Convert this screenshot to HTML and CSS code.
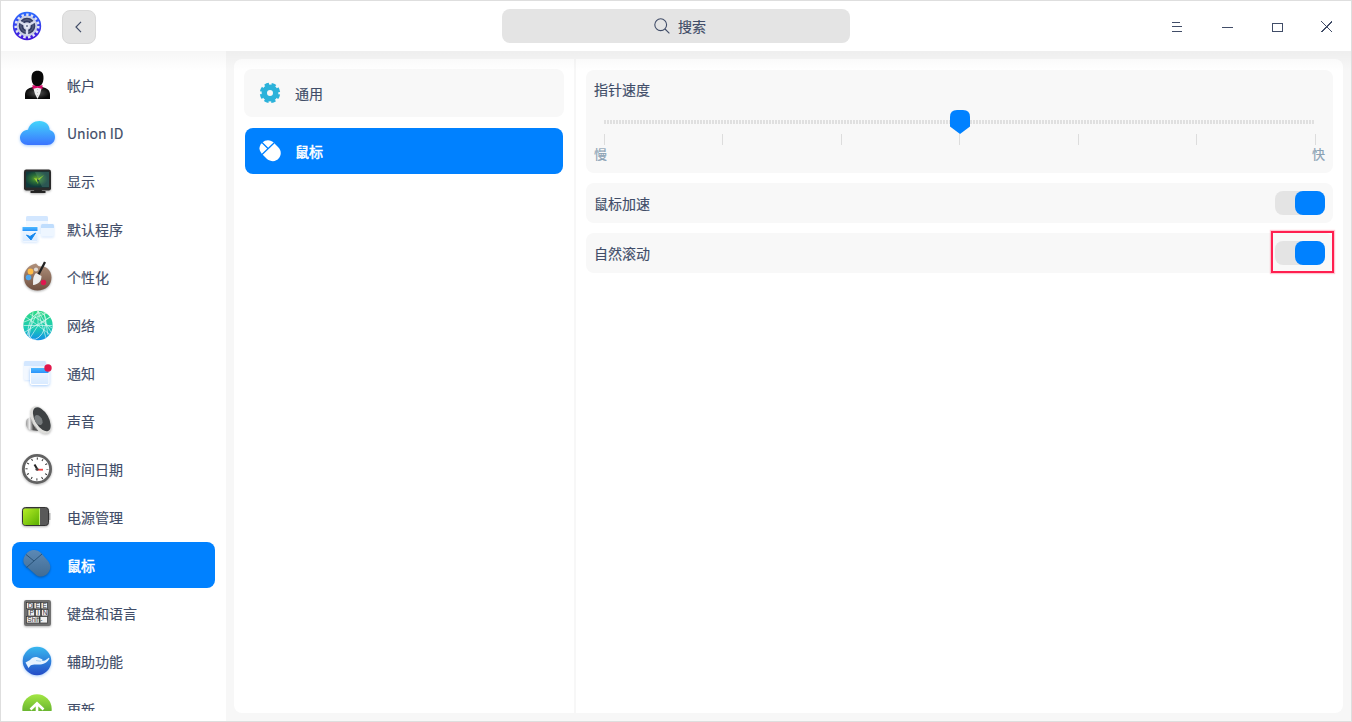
FILE: index.html
```html
<!DOCTYPE html>
<html lang="zh-CN">
<head>
<meta charset="utf-8">
<title>控制中心</title>
<link rel="stylesheet" href="styles.css">
</head>
<body>
<div class="window">
  <header class="titlebar">
    <div class="title-left">
      <svg class="app-icon" viewBox="0 0 30 30">
        <defs><linearGradient id="logo" x2="0" y2="1"><stop stop-color="#2c6dff"/><stop offset="1" stop-color="#4312d8"/></linearGradient></defs>
        <circle cx="15" cy="15" r="14.2" fill="url(#logo)"/>
        <circle cx="15" cy="15" r="11.2" fill="none" stroke="#dfe3f6" stroke-width="2.8" stroke-dasharray="2.4 2.291"/>
        <circle cx="15" cy="15" r="10.4" fill="#c9cee2"/>
        <circle cx="15" cy="15" r="6" fill="none" stroke="#343c63" stroke-width="4.6"/>
        <circle cx="15" cy="15" r="6.2" fill="none" stroke="#68718c" stroke-width=".9"/>
        <path d="M15 15V24M15 15L7.200 10.500M15 15L22.800 10.500" stroke="#d8dced" stroke-width="2.4"/>
        <circle cx="15" cy="15" r="2.7" fill="#e6e9f5"/><circle cx="15" cy="15" r="1" fill="#6a7391"/>
      </svg>
      <button class="back"><svg viewBox="0 0 12 12"><path d="M8 .8L3 6l5 5.2" fill="none" stroke="#414d68" stroke-width="1.2"/></svg></button>
    </div>
    <div class="search">
      <svg viewBox="0 0 16 16" fill="none" stroke="#414d68" stroke-width="1.1"><circle cx="6.7" cy="6.7" r="5.9"/><path d="M11 11l4.400 4.400"/></svg>
      <span>搜索</span>
    </div>
    <div class="controls">
      <svg viewBox="0 0 12 12"><path d="M1 1.500h8M1 5.500h10M1 10.500h10"/></svg>
      <svg viewBox="0 0 12 12"><path d="M1 6.500h11"/></svg>
      <svg viewBox="0 0 12 12"><path d="M1.500 2.500h10v8h-10z"/></svg>
      <svg viewBox="0 0 12 12"><path d="M.5 .5l10.500 10.500M11 .5L.5 11"/></svg>
    </div>
  </header>
  <div class="body">
    <nav class="sidebar">
      <div class="item">
        <svg viewBox="0 0 36 36"><defs><radialGradient id="suit"><stop stop-color="#555"/><stop offset="1" stop-color="#080808"/></radialGradient></defs>
          <path d="M6 32v-4c0-5 3-7 8-8h9c5 1 8 3 8 8v4z" fill="url(#suit)"/><path d="M14 20h9l-2 7-2.500 5L16 27z" fill="#eee"/><path d="M18.500 22v9" stroke="#aaa" stroke-width=".6" stroke-dasharray="1 2"/>
          <path d="M12.500 11c0-5 2-7.300 6-7.300s6 2.300 6 7.300c0 5-2.500 8.500-6 8.500s-6-3.500-6-8.500z" fill="#090909"/><path d="M13.500 18l5 1.300 5-1.300v4l-5-1.200-5 1.200z" fill="#d50a68"/></svg>
        <span>帐户</span></div>
      <div class="item">
        <svg viewBox="0 0 36 36"><defs><linearGradient id="cloud" x2="0" y2="1"><stop stop-color="#43d5fb"/><stop offset="1" stop-color="#3b74ff"/></linearGradient></defs>
          <path class="blue-shadow" d="M9 30C4.500 30 1 27 1 22.800S4.500 15 9 14.800C10.500 9 15 6 20.500 6c6 0 9.800 3.500 10.200 9 3.300.8 5.300 3.500 5.300 7 0 4.800-3.300 8-8 8z" fill="url(#cloud)"/></svg>
        <span>Union ID</span></div>
      <div class="item">
        <svg viewBox="0 0 36 36"><defs><radialGradient id="screen" cx=".45" cy=".45"><stop stop-color="#6da62b"/><stop offset=".45" stop-color="#2b6f38"/><stop offset="1" stop-color="#103a3c"/></radialGradient></defs>
          <path class="shadow" d="M16 24h6l1 4h3.500v2H11.500v-2H15z" fill="#292929"/><rect class="shadow" x="5" y="6.500" width="27" height="21" rx="2.200" fill="#2a2a2a"/><rect x="7" y="8.500" width="23" height="16" fill="url(#screen)"/><path d="M16 9h14v15h-7z" fill="#9bc7ad" opacity=".2"/><path d="M15 15l4 1 6-4-5 5-1 4-2-3z" fill="#9ad633"/><path d="M18 16l2 1-1 4z" fill="#102d54"/></svg>
        <span>显示</span></div>
      <div class="item">
        <svg viewBox="0 0 36 36"><defs><linearGradient id="blue" x2="0" y2="1"><stop stop-color="#4eb9ff"/><stop offset="1" stop-color="#2a94fb"/></linearGradient><linearGradient id="pale" x2="0" y2="1"><stop stop-color="#f4f9ff"/><stop offset="1" stop-color="#d8eaff"/></linearGradient></defs>
          <rect x="7" y="5" width="22" height="18" rx="1.500" fill="#f2f8ff"/><path d="M7 10V6.500Q7 5 8.500 5h19Q29 5 29 6.500V10z" fill="#d3e7ff"/>
          <g class="soft-shadow"><rect x="22" y="13" width="13" height="12.500" rx="1.500" fill="#eef6ff"/><path d="M22 17v-2.500q0-1.500 1.500-1.500h10q1.500 0 1.500 1.500V17z" fill="#bfddfd"/></g>
          <g class="soft-shadow"><rect x="3" y="15" width="16" height="15.500" rx="1.500" fill="url(#pale)" stroke="#fff" stroke-width=".6"/><path d="M3.500 16h15v4h-15z" fill="url(#blue)"/><path d="M7.500 24l3.500 1.500 5.500-3.500-4.500 7z" fill="#1487ef" stroke="#1487ef"/></g></svg>
        <span>默认程序</span></div>
      <div class="item">
        <svg viewBox="0 0 36 36"><defs><linearGradient id="wood" x2="0" y2="1"><stop stop-color="#b0917c"/><stop offset="1" stop-color="#705040"/></linearGradient></defs>
          <path class="shadow" d="M17 4.500q3 4.500 7 2.500l4 2c3 2.500 4.500 5.500 4.500 9.500 0 8-6 13-14 13S5 26 5 18.500 10 6 17 4.500z" fill="url(#wood)"/><circle cx="17" cy="10.500" r="2.100" fill="#ded9d5"/><circle cx="11.500" cy="12.500" r="2.900" fill="#ffbc48"/><circle cx="9.500" cy="18.500" r="2.800" fill="#4da7ee"/><circle cx="24.500" cy="23.500" r="2.700" fill="#df184f"/><path d="M26 3L19.500 15.500" stroke="#222" stroke-width="2.300"/><path d="M17 14l5.500 3c0 5-3 8.500-8.500 9 .5-3-1-8 3-12z" fill="#eee"/></svg>
        <span>个性化</span></div>
      <div class="item">
        <svg viewBox="0 0 36 36"><defs><linearGradient id="net" x2="0" y2="1"><stop stop-color="#2fd985"/><stop offset=".6" stop-color="#1bcbb5"/><stop offset="1" stop-color="#118fe8"/></linearGradient></defs>
          <circle cx="19" cy="18.500" r="14.700" fill="url(#net)"/><g fill="none" stroke="#fff" stroke-width=".65" opacity=".85"><path d="M4.500 18.500h29M19 4v14.500L7 10m12-6L8 28m11-24l8 27m-8-27l13 21M19 18.500L11 31m8-12.500L31 10M19 18.500l12 9M14 5l-4 25M25 5l4 23M5 15L28 6M6 25l25-15M11 7l22 14"/><ellipse cx="18" cy="19" rx="8" ry="14" transform="rotate(20 18 19)"/></g></svg>
        <span>网络</span></div>
      <div class="item">
        <svg viewBox="0 0 36 36"><g class="soft-shadow"><rect x="5" y="6" width="22" height="19" rx="1.500" fill="#f3f8ff"/><path d="M5 11V7.500Q5 6 6.500 6h19Q27 6 27 7.500V11z" fill="#d3e7ff"/></g><g class="blue-shadow"><rect x="11.500" y="13" width="18.500" height="16.500" rx="1.500" fill="url(#pale)" stroke="#fff"/><path d="M12 13h17.500v5H12z" fill="url(#blue)"/></g><circle cx="29" cy="13" r="3.700" fill="#e1174c"/></svg>
        <span>通知</span></div>
      <div class="item">
        <svg viewBox="0 0 36 36"><defs><linearGradient id="metal"><stop stop-color="#999"/><stop offset=".3" stop-color="#eee"/><stop offset=".6" stop-color="#555"/></linearGradient></defs>
          <path class="shadow" d="M8 16l6-3 5 15-7-1c-5-1-6-7-4-11z" fill="url(#metal)"/><ellipse class="shadow" cx="21.500" cy="17" rx="8.500" ry="15" transform="rotate(-30 21.500 17)" fill="#dededb"/><ellipse cx="22.800" cy="16.200" rx="6.800" ry="13.300" transform="rotate(-30 22.800 16.200)" fill="#3d4143"/><ellipse cx="19.500" cy="17" rx="3.500" ry="5.500" transform="rotate(-30 19.500 17)" fill="#777c7e"/></svg>
        <span>声音</span></div>
      <div class="item">
        <svg viewBox="0 0 36 36"><circle class="shadow" cx="18" cy="18" r="13.600" fill="#fff" stroke="#626262" stroke-width="2.800"/><circle cx="18" cy="18" r="10.400" fill="none" stroke="#333" stroke-width="2.200" stroke-dasharray="1 4.445" stroke-dashoffset=".5"/><path d="M18.500 18.500l-3-5" stroke="#222" stroke-width="2"/><path d="M18 18.700h6" stroke="#f04444" stroke-width="1.800"/><circle cx="18" cy="18.300" r="1.500" fill="#444"/></svg>
        <span>时间日期</span></div>
      <div class="item">
        <svg viewBox="0 0 36 36"><defs><linearGradient id="battery" x2="1" y2="1"><stop stop-color="#b5ed26"/><stop offset="1" stop-color="#58ae00"/></linearGradient></defs>
          <path d="M29 14h2.500v7H29z" fill="#bbb"/><rect class="shadow" x="3.500" y="8.500" width="26" height="18" rx="3" fill="#595959" stroke="#333"/><path d="M6 9.500h15V26H6q-2 0-2-2V11.500q0-2 2-2z" fill="url(#battery)"/><path d="M20.500 9.500V26" stroke="#bef26b"/></svg>
        <span>电源管理</span></div>
      <div class="item selected">
        <svg viewBox="0 0 36 36"><defs><linearGradient id="mouse" x2="0" y2="1"><stop stop-color="#5c89b5"/><stop offset="1" stop-color="#416c94"/></linearGradient></defs>
          <g class="shadow"><path d="M7 7c4-5 11-5 15-1l7 8c3 4 3 8 0 12s-9 5-13 1L7 19c-4-3-3-8 0-12z" fill="url(#mouse)"/><path d="M7.500 20.500L23 7M7 7.500l8 6.500" fill="none" stroke="#2a5479"/></g></svg>
        <span>鼠标</span></div>
      <div class="item">
        <svg viewBox="0 0 36 36"><rect class="shadow" x="5" y="5" width="27" height="26" rx="2.200" fill="#707070"/><g fill="#f0f0f0" stroke="#333" stroke-width=".7"><rect x="7.500" y="7.500" width="6.500" height="6.300"/><rect x="15" y="7.500" width="6.500" height="6.300"/><rect x="22" y="7.500" width="6.500" height="6.300"/><rect x="9" y="14.500" width="6.500" height="6.500"/><rect x="16.500" y="14.500" width="5" height="6.500"/><rect x="22.500" y="14.500" width="6.500" height="6.500"/><rect x="7.500" y="21.500" width="13" height="6.500"/><rect x="21" y="21.500" width="7.500" height="6.500"/></g><g class="keys"><text x="8.700" y="12.800">D</text><text x="16.400" y="12.800">E</text><text x="23.400" y="12.800">E</text><text x="10.500" y="19.900">P</text><text x="18.200" y="19.900">I</text><text x="23.700" y="19.900">N</text><text x="8.300" y="27">Shift-</text></g></svg>
        <span>键盘和语言</span></div>
      <div class="item">
        <svg viewBox="0 0 36 36"><defs><linearGradient id="assist" x2="0" y2="1"><stop stop-color="#38b8ef"/><stop offset="1" stop-color="#244bc6"/></linearGradient></defs><circle class="blue-shadow" cx="18" cy="18" r="14.300" fill="url(#assist)"/><path d="M6.500 19.500l4.500-2.500c2-2.500 5-3.500 8-2.500l4 1.800c1 .7.500 1.700-1 1.800l4-.6 3.500-2.500c1-.5 1 .5.500 1.200-1.500 2.500-4 4.300-7 5-4 1-8-.5-11.500 1.300L9.500 25z" fill="#e6f3ff"/><path d="M17 17.500l5 .8" fill="none" stroke="#91c7ef" stroke-width=".7"/></svg>
        <span>辅助功能</span></div>
      <div class="item">
        <svg viewBox="0 0 36 36"><defs><linearGradient id="update" x2="0" y2="1"><stop stop-color="#a3e744"/><stop offset="1" stop-color="#3e9020"/></linearGradient></defs><circle cx="18" cy="18" r="14.700" fill="url(#update)"/><path d="M11.500 18.500L18 12.300l6.500 6.200M18 12.500V27" fill="none" stroke="#fff" stroke-width="2.600"/></svg>
        <span>更新</span></div>
    </nav>
    <main class="content">
      <section class="sections">
        <div class="section-item">
          <svg viewBox="0 0 22 22" fill="none" stroke="#2cb2da"><circle cx="11" cy="11" r="5.700" stroke-width="5.400"/><circle cx="11" cy="11" r="8.800" stroke-width="2.800" stroke-dasharray="4.300 2.611" stroke-dashoffset="-1.306"/></svg>
          <span>通用</span></div>
        <div class="section-item active">
          <svg viewBox="0 0 22 22"><path d="M3 3c4-4 9-3 12 0l4 4c4 4 3 8 1 11-3 4-8 4-12 1l-4-4C0 11-1 7 3 3z" fill="#fff"/><path d="M3 14.500L15 3M3 2.500l6 6" stroke="#0081ff" stroke-width="1.300"/></svg>
          <span>鼠标</span></div>
      </section>
      <section class="settings">
        <div class="card speed">
          <div class="speed-title">指针速度</div>
          <svg class="slider" viewBox="0 0 720 36"><path d="M4 12h710" stroke="#e0e0e0" stroke-width="4" stroke-dasharray="2 1"/><path d="M4.500 24v11M122.500 24v11M241.500 24v11M359.500 24v11M478.500 24v11M596.500 24v11M715.500 24v11" stroke="#ddd"/><path d="M350 7q0-7 7-7h6q7 0 7 7v9.500l-10 7.500-10-7.500z" fill="#0081ff"/></svg>
          <div class="speed-labels"><span>慢</span><span>快</span></div>
        </div>
        <div class="card row"><span>鼠标加速</span><span class="toggle"><i></i></span></div>
        <div class="card row"><span>自然滚动</span><span class="toggle"><i></i><b class="highlight"></b></span></div>
      </section>
    </main>
  </div>
</div>
</body>
</html>
```
FILE: styles.css
```css
* { box-sizing: border-box; }

body {
  margin: 0;
  font: 14px/20px "Noto Sans CJK SC", "Noto Sans", sans-serif;
  color: #414d68;
  -webkit-text-stroke: .15px currentColor;
}

.window {
  width: 1352px;
  height: 722px;
  border: 1px solid #dedede;
  display: flex;
  flex-direction: column;
  background: #f7f7f7;
  overflow: hidden;
}

.titlebar {
  height: 50px;
  flex: none;
  display: grid;
  grid-template-columns: 501px 348px 1fr;
  align-items: center;
  background: #fff;
}

.title-left { display: flex; align-items: center; gap: 20px; padding-left: 11px; }
.app-icon { width: 30px; height: 30px; }
.back {
  width: 34px;
  height: 34px;
  padding: 0;
  margin-top: 2px;
  border: 1px solid #d9d9d9;
  border-radius: 8px;
  background: #e4e4e4;
  display: grid;
  place-items: center;
}
.back svg { width: 12px; height: 12px; }

.search {
  height: 34px;
  border-radius: 8px;
  background: #e4e4e4;
  display: flex;
  align-items: center;
  justify-content: center;
  gap: 8px;
  padding-left: 8px;
}
.search svg { width: 16px; height: 16px; }
.search svg { margin-left: 0; }

.controls { display: flex; justify-content: flex-end; gap: 38px; padding: 2px 18px 0 0; }
.controls svg { width: 12px; height: 12px; fill: none; stroke: #414d68; stroke-width: 1; shape-rendering: crispEdges; }

.body { flex: 1; min-height: 0; display: flex; position: relative; }
.body::after {
  content: "";
  position: absolute;
  inset: 0 0 auto;
  height: 20px;
  background: linear-gradient(rgba(0, 0, 0, .035), transparent);
  pointer-events: none;
}

.sidebar {
  width: 225px;
  height: 660px;
  flex: none;
  padding: 11px 11px 0;
  background: #fff;
  box-shadow: 0 10px #fff;
  overflow: hidden;
}
.item {
  height: 46px;
  margin-bottom: 2px;
  padding-left: 7px;
  border-radius: 8px;
  display: flex;
  align-items: center;
  gap: 12px;
}
.item svg { width: 36px; height: 36px; overflow: visible; flex: none; }
.selected, .active { background: #0081ff; color: #fff; }
.selected span, .active span { -webkit-text-stroke: .5px #fff; }

.shadow { filter: drop-shadow(0 1px 1px rgba(0, 0, 0, .3)); }
.blue-shadow { filter: drop-shadow(0 1px 1.5px rgba(38, 130, 246, .4)); }
.soft-shadow { filter: drop-shadow(0 1px 1px rgba(38, 130, 246, .2)); }
.keys { font: 6.5px "Liberation Sans", sans-serif; fill: #333; -webkit-text-stroke: 0; }

.content {
  width: 1109px;
  height: 654px;
  margin: 8px 0 0 8px;
  border-radius: 8px;
  background: #fff;
  display: flex;
}
.sections { width: 342px; border-right: 2px solid #f7f7f7; padding: 10px; }
.section-item {
  height: 48px;
  border-radius: 8px;
  padding-left: 15px;
  display: flex;
  align-items: center;
  gap: 14px;
  background: #f8f8f8;
}
.section-item svg { width: 22px; height: 22px; }
.section-item.active { height: 46px; margin: 11px 1px 0; padding-left: 14px; background: #0081ff; }

.settings { flex: 1; padding: 11px 10px; display: flex; flex-direction: column; gap: 10px; }
.card { background: #f8f8f8; border-radius: 8px; padding: 0 8px; }
.speed { height: 103px; padding-top: 9px; }
.slider { display: block; width: 720px; height: 36px; margin: 11px 0 0 6px; }
.speed-labels { display: flex; justify-content: space-between; margin-top: -1px; color: #8aa1b4; font-size: 13px; line-height: 18px; }
.row { height: 40px; display: flex; align-items: center; justify-content: space-between; }
.toggle {
  position: relative;
  width: 50px;
  height: 24px;
  border-radius: 8px;
  background: #e4e4e4;
  display: flex;
  justify-content: flex-end;
}
.toggle i { width: 30px; border-radius: 8px; background: #0081ff; }
.highlight {
  position: absolute;
  inset: -10px -9px -8px -4px;
  border: 2px solid #ff1f4f;
  box-shadow: 0 0 1px 1px rgba(255, 31, 79, .25);
}
```
